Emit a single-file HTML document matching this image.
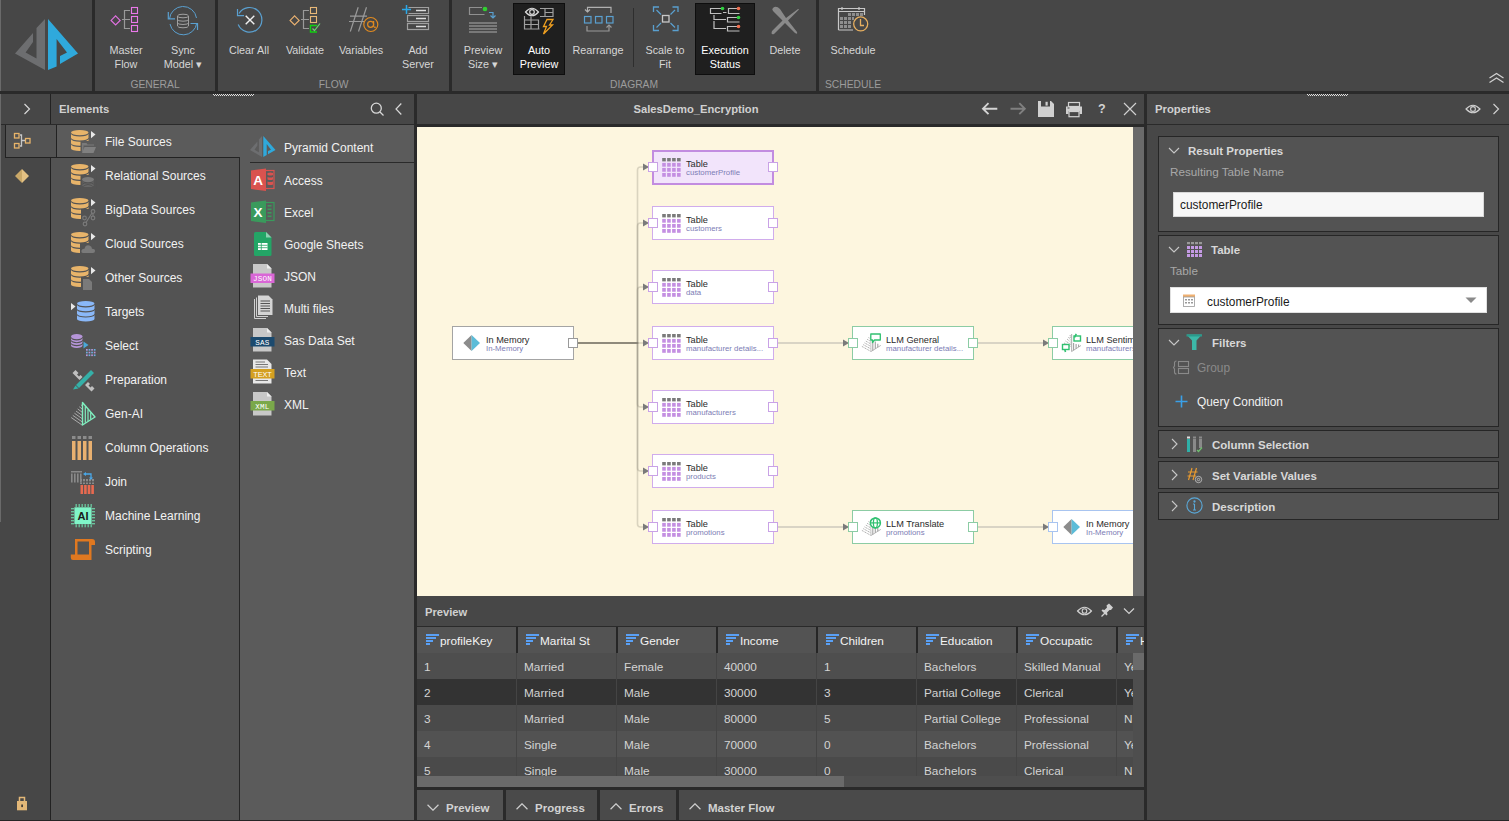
<!DOCTYPE html>
<html><head><meta charset="utf-8">
<style>
*{box-sizing:border-box;margin:0;padding:0}
html,body{width:1509px;height:821px;overflow:hidden;background:#474747;font-family:"Liberation Sans",sans-serif;color:#dcdcdc}
.a{position:absolute}
.sep{position:absolute;background:#2a2a2a}
.btn{position:absolute;top:0;text-align:center;font-size:10.8px;line-height:14px;color:#d6d6d6}
.btn .t{position:absolute;left:-30px;right:-30px;top:43px}
.glabel{position:absolute;top:78.5px;font-size:10.3px;line-height:12px;color:#9c9c9c;text-align:center}
.hdr{font-size:11.3px;font-weight:bold;color:#d0d0d0;line-height:16px}
.cat{font-size:12px;color:#f2f2f2;line-height:18px;white-space:nowrap}
.ntitle{font-size:9.2px;color:#2a2a2a;line-height:11px;white-space:nowrap}
.nsub{font-size:7.8px;color:#7d7db5;line-height:10px;white-space:nowrap}
.phdr{font-size:11.5px;font-weight:bold;color:#d8d8d8;line-height:16px;white-space:nowrap}
.plbl{font-size:11.7px;color:#a8a8a8;line-height:16px;white-space:nowrap}
</style></head><body>
<!-- left strip -->
<div class="a" style="left:0;top:0;width:1px;height:522px;background:#6a6a6a"></div>
<!-- toolbar -->
<div class="a" style="left:1px;top:0;width:1508px;height:91px;background:#474747"></div>
<div class="sep" style="left:0;top:91px;width:1509px;height:3px"></div>
<div class="sep" style="left:92px;top:0;width:3px;height:91px"></div>
<div class="sep" style="left:215px;top:0;width:3px;height:91px"></div>
<div class="sep" style="left:449px;top:0;width:3px;height:91px"></div>
<div class="sep" style="left:816px;top:0;width:3px;height:91px"></div>

<!-- body regions -->
<div class="a" style="left:1px;top:94px;width:49px;height:726px;background:#474747"></div>
<div class="sep" style="left:50px;top:94px;width:1px;height:726px;background:#222"></div>
<div class="a" style="left:51px;top:94px;width:363px;height:30px;background:#474747"></div>
<div class="sep" style="left:1px;top:124px;width:413px;height:1px"></div>
<div class="a" style="left:51px;top:125px;width:188px;height:695px;background:#535353"></div>
<div class="sep" style="left:239px;top:157px;width:1px;height:663px;background:#262626"></div>
<div class="a" style="left:240px;top:125px;width:174px;height:695px;background:#5b5b5b"></div>
<div class="sep" style="left:414px;top:94px;width:3px;height:727px"></div>

<!-- canvas -->
<div class="a" style="left:417px;top:94px;width:727px;height:30px;background:#474747"></div>
<div class="sep" style="left:417px;top:124px;width:727px;height:3px"></div>
<div class="a" style="left:417px;top:127px;width:716px;height:469px;background:#fdf6df"></div>
<div class="a" style="left:1133px;top:127px;width:11px;height:469px;background:#6a6a6a"></div>
<div class="sep" style="left:1144px;top:94px;width:3px;height:727px"></div>

<!-- preview -->
<div class="a" style="left:417px;top:596px;width:727px;height:30px;background:#474747"></div>
<div class="sep" style="left:417px;top:626px;width:727px;height:1px"></div>

<!-- properties -->
<div class="a" style="left:1147px;top:94px;width:362px;height:30px;background:#474747"></div>
<div class="sep" style="left:1147px;top:124px;width:362px;height:1px"></div>
<div class="sep" style="left:0;top:820px;width:1509px;height:1px;background:#262626"></div>
<!-- LOGO -->
<svg class="a" style="left:0;top:0" width="92" height="91" viewBox="0 0 92 91">
<polygon fill="#6d6e70" points="45,19 45,70 15,53.6 33,33 33,42 25.6,52.4 36.5,58.5 36.5,28"/>
<polygon fill="#2fa9dc" points="48,19 78,53.6 60,64 60,56 67,52.4 56.6,39 56.6,66.4 48,70"/>
</svg>
<!-- GENERAL -->
<svg class="a" style="left:95px;top:0" width="120" height="40" viewBox="95 0 120 40" fill="none" stroke-width="1.2">
<path d="M115.6 15.9 L120.1 20.4 L115.6 24.9 L111.1 20.4 Z" stroke="#e070e0"/>
<rect x="131.5" y="7.5" width="6" height="6" stroke="#ea78ea" stroke-width="1.1"/>
<rect x="131.5" y="16.5" width="6" height="6" stroke="#ea78ea" stroke-width="1.1"/>
<rect x="131.5" y="25.5" width="6" height="6" stroke="#ea78ea" stroke-width="1.1"/>
<path d="M130 10.5 H124.5 V28.5 H130 M122 19.5 H130" stroke="#9a9a9a"/>
<path d="M169.5 19 A13.6 13.6 0 0 1 196.5 18" stroke="#5aa0d0" stroke-width="1"/>
<path d="M168.3 12 V18.8 H175" stroke="#5aa0d0"/>
<path d="M196.8 23 A13.6 13.6 0 0 1 170 24" stroke="#5aa0d0" stroke-width="1"/>
<path d="M190.5 23.5 H197.5 V30" stroke="#5aa0d0"/>
<g stroke="#a0a0a0" stroke-width="1"><ellipse cx="183" cy="16" rx="5.5" ry="1.8"/><path d="M177.5 16 V26 A5.5 1.8 0 0 0 188.5 26 V16 M177.5 19.4 A5.5 1.8 0 0 0 188.5 19.4 M177.5 22.7 A5.5 1.8 0 0 0 188.5 22.7"/></g>
</svg>
<div class="btn" style="left:126px"><div class="t">Master<br>Flow</div></div>
<div class="btn" style="left:183px"><div class="t">Sync<br>Model &#9662;</div></div>
<div class="glabel" style="left:95px;width:120px">GENERAL</div>
<!-- FLOW -->
<svg class="a" style="left:218px;top:0" width="231" height="40" viewBox="218 0 231 40" fill="none" stroke-width="1.2">
<path d="M238.2 24.5 A12.3 12.3 0 1 0 239 13.5" stroke="#5aa0d0"/>
<path d="M237.5 9 V15.7 H244" stroke="#5aa0d0"/>
<path d="M245.7 15.7 L254.3 24.3 M254.3 15.7 L245.7 24.3" stroke="#f0f0f0" stroke-width="1.4"/>
<path d="M294.6 15.9 L299.1 20.4 L294.6 24.9 L290.1 20.4 Z" stroke="#e8b070"/>
<rect x="310.5" y="7.5" width="6" height="6" stroke="#e8b878" stroke-width="1.1"/>
<rect x="310.5" y="16.5" width="6" height="6" stroke="#e8b878" stroke-width="1.1"/>
<path d="M317 25.5 H310.5 V32 H317" stroke="#10d010" stroke-width="1.4"/>
<path d="M312.5 28.5 L314.5 30.5 L320 23.5" stroke="#70d070"/>
<path d="M309 10.5 H303.5 V28.5 H309 M301 19.5 H309" stroke="#9a9a9a"/>
<path d="M358.2 7.3 L350.3 31.5 M366.5 7.3 L358.5 31.5 M350 16.2 H367 M349 21.5 H364" stroke="#9a9a9a"/>
<circle cx="370.8" cy="24.5" r="7" stroke="#e08a20"/>
<circle cx="370.6" cy="24.3" r="3" stroke="#e08a20"/>
<path d="M373.6 21 V26 Q374 28 376 27" stroke="#e08a20"/>
<path d="M402 9.4 H411 M406.5 5 V14" stroke="#2aa8e8" stroke-width="1.5"/>
<path d="M408.5 7.5 H428.5 V13.5 H408.5" stroke="#a0a0a0"/>
<rect x="407.5" y="15.5" width="21" height="6" stroke="#a0a0a0"/>
<rect x="407.5" y="23.5" width="21" height="6" stroke="#a0a0a0"/>
<path d="M416 10.5 H426 M416 18.5 H426 M416 26.5 H426" stroke="#dcdcdc" stroke-width="1.3"/>
</svg>
<div class="btn" style="left:249px"><div class="t">Clear All</div></div>
<div class="btn" style="left:305px"><div class="t">Validate</div></div>
<div class="btn" style="left:361px"><div class="t">Variables</div></div>
<div class="btn" style="left:418px"><div class="t">Add<br>Server</div></div>
<div class="glabel" style="left:218px;width:231px">FLOW</div>
<!-- DIAGRAM -->
<div class="a" style="left:513px;top:3px;width:52px;height:72px;background:#1f1f1f;border:1px solid #0e0e0e"></div>
<div class="a" style="left:695px;top:3px;width:60px;height:72px;background:#1f1f1f;border:1px solid #0e0e0e"></div>
<div class="a" style="left:633px;top:8px;width:1px;height:59px;background:#2e2e2e"></div>
<svg class="a" style="left:452px;top:0" width="364" height="40" viewBox="452 0 364 40" fill="none" stroke-width="1.2">
<path d="M484.5 14.5 H469.5 V7.5 H482" stroke="#909090"/>
<circle cx="485" cy="9" r="2.3" fill="#30d030" stroke="none"/>
<path d="M489 12.5 H493 V18 M490.5 15.5 L493 18 L495.5 15.5" stroke="#5aa0d0"/>
<path d="M469 23 H497 M469 26 H497 M469 29 H497 M469 32 H497" stroke="#8a8a8a" stroke-width="1.6"/>
<path d="M525.5 12 Q532 4.5 538.5 12 Q532 19.5 525.5 12 Z" stroke="#d8d8d8"/>
<circle cx="532" cy="12" r="2.3" stroke="#d8d8d8"/>
<path d="M540 8.5 H553 V16.5 H540 M545 8.5 V16.5 M545 12.5 H553" stroke="#a0a0a0"/>
<path d="M524.5 16 V29 H539.5 M524.5 20 H538.5 V29 M524.5 24.5 H538.5 M531 16.5 V29" stroke="#a0a0a0"/>
<path d="M547 19.5 H553 L549.5 25 H552.5 L543.5 34 L546.5 26.5 H543.5 Z" stroke="#f0a020" stroke-width="1.3"/>
<path d="M587.5 12 V7.3 H611 V13" stroke="#b0b0b0"/>
<path d="M585 9.5 L587.5 12 L590 9.5" stroke="#b0b0b0"/>
<rect x="584.5" y="16.5" width="6.5" height="6.5" stroke="#5aa0d0"/>
<rect x="595.5" y="16.5" width="6.5" height="6.5" stroke="#5aa0d0"/>
<rect x="606.5" y="16.5" width="6.5" height="6.5" stroke="#5aa0d0"/>
<path d="M587 26 V31 H609 V25" stroke="#9a9a9a"/>
<path d="M606.5 27.5 L609 25 L611.5 27.5" stroke="#9a9a9a"/>
<path d="M653.5 12 V7 H659 M672.5 7 H678 V12 M653.5 25 V30.5 H659 M672.5 30.5 H678 V25" stroke="#5aa0d0" stroke-width="1.3"/>
<path d="M656.5 10 L661 14.5 M675 10 L670.5 14.5 M656.5 27.5 L661 23 M675 27.5 L670.5 23" stroke="#5aa0d0"/>
<rect x="662.5" y="15.5" width="6.5" height="6.5" stroke="#c8c8c8" stroke-width="1.3"/>
<path d="M722 8.5 H710.5 V13.5 H721.5 M739 8.5 H728.5 V13.5 H739.5 M723 12.5 H726.5" stroke="#c0c0c0"/>
<path d="M714 15 V19.5 H726 M739 17.5 H727.5 V22 H739.5 M714 21 V28.5 H726 M739 26.5 H727.5 V31 H739.5" stroke="#c0c0c0"/>
<circle cx="722.5" cy="8.5" r="1.8" fill="#30d040" stroke="none"/>
<circle cx="738.5" cy="8.5" r="1.8" fill="#f07050" stroke="none"/>
<circle cx="738.5" cy="17.5" r="1.8" fill="#30d040" stroke="none"/>
<circle cx="738.5" cy="26.5" r="1.8" fill="#f07050" stroke="none"/>
<path d="M773 8 Q776 5 780 9 L786 18 L798 9 Q799.5 8.5 798.5 10 L788 20.5 L797 32 Q798 35 795 33 L785 23 L774 34 Q770.5 35 772 31 L782.5 20.5 L773 11 Q771.5 9 773 8 Z" fill="#8a8a8a" stroke="none"/>
</svg>
<div class="btn" style="left:483px"><div class="t">Preview<br>Size &#9662;</div></div>
<div class="btn" style="left:539px;color:#fff"><div class="t">Auto<br>Preview</div></div>
<div class="btn" style="left:598px"><div class="t">Rearrange</div></div>
<div class="btn" style="left:665px"><div class="t">Scale to<br>Fit</div></div>
<div class="btn" style="left:725px;color:#fff"><div class="t">Execution<br>Status</div></div>
<div class="btn" style="left:785px"><div class="t">Delete</div></div>
<div class="glabel" style="left:452px;width:364px">DIAGRAM</div>
<!-- SCHEDULE -->
<svg class="a" style="left:819px;top:0" width="60" height="40" viewBox="819 0 60 40" fill="none">
<path d="M838.5 30 V8.5 H864.5 V15" stroke="#c8c8c8" stroke-width="1.2"/>
<path d="M838.5 11.5 H864.5 M838.5 30 H853" stroke="#c8c8c8" stroke-width="1.2"/>
<path d="M842 7 V10 M859 7 V10" stroke="#c8c8c8" stroke-width="1.2"/>
<g fill="#8e8e8e"><rect x="848" y="13" width="3" height="3"/><rect x="852" y="13" width="3" height="3"/><rect x="856" y="13" width="3" height="3"/><rect x="860" y="13" width="3" height="3"/>
<rect x="840" y="17" width="3" height="3"/><rect x="844" y="17" width="3" height="3"/><rect x="848" y="17" width="3" height="3"/><rect x="852" y="17" width="2" height="3"/>
<rect x="840" y="21" width="3" height="3"/><rect x="844" y="21" width="3" height="3"/><rect x="848" y="21" width="3" height="3"/>
<rect x="840" y="25" width="3" height="3"/><rect x="844" y="25" width="3" height="3"/><rect x="848" y="25" width="3" height="3"/></g>
<circle cx="860.7" cy="23.9" r="7" stroke="#e8b060" stroke-width="1.3"/>
<path d="M860.5 19 V25.5 H864" stroke="#e8b060" stroke-width="1.3"/>
</svg>
<div class="btn" style="left:853px"><div class="t">Schedule</div></div>
<div class="glabel" style="left:793px;width:120px">SCHEDULE</div>
<svg class="a" style="left:1486px;top:70px" width="20" height="16" viewBox="1486 70 20 16" fill="none" stroke="#d0d0d0" stroke-width="1.3">
<path d="M1489.5 78 L1496.5 73.5 L1503.5 78 M1489.5 82.5 L1496.5 78 L1503.5 82.5"/>
</svg>
<!-- grips -->
<svg class="a" style="left:213px;top:94px" width="41" height="2"><pattern id="zz" width="2" height="2" patternUnits="userSpaceOnUse"><rect x="0" y="0" width="1" height="1" fill="#e0e0e0"/><rect x="1" y="1" width="1" height="1" fill="#e0e0e0"/></pattern><rect width="41" height="2" fill="url(#zz)"/></svg>
<svg class="a" style="left:1307px;top:94px" width="41" height="2"><rect width="41" height="2" fill="url(#zz)"/></svg>
<!-- left sidebar -->
<svg class="a" style="left:22px;top:103px" width="10" height="12" viewBox="0 0 10 12" fill="none" stroke="#d8d8d8" stroke-width="1.2"><path d="M2.5 1 L7.5 6 L2.5 11"/></svg>
<div class="a" style="left:5px;top:125px;width:52px;height:33px;background:#535353;border-left:1px solid #222;border-right:1px solid #222;border-bottom:1px solid #222"></div>
<svg class="a" style="left:10px;top:128px" width="26" height="26" viewBox="10 128 26 26" fill="none" stroke-width="1.3">
<rect x="14.5" y="133.5" width="4.5" height="4.5" stroke="#e8b46a"/>
<rect x="14.5" y="143.5" width="4.5" height="4.5" stroke="#e8b46a"/>
<rect x="25.5" y="138.5" width="4.5" height="4.5" stroke="#e8b46a"/>
<path d="M20 135 H21.5 V146 H20 M21.5 140.5 H25" stroke="#c8c8c8"/>
</svg>
<svg class="a" style="left:14px;top:168px" width="16" height="16" viewBox="0 0 16 16"><polygon points="8,1 15,8 8,15" fill="#e3c183"/><polygon points="8,1 1,8 8,15" fill="#c9a868"/></svg>
<svg class="a" style="left:15px;top:795px" width="14" height="16" viewBox="15 795 14 16"><path d="M19.5 801.5 V797.5 H24.5 V801.5" fill="none" stroke="#e3b878" stroke-width="1.5"/><rect x="17" y="801" width="10" height="9.3" fill="#e3b878"/><rect x="21.3" y="804.5" width="1.6" height="2.6" fill="#333"/></svg>

<!-- Elements header -->
<div class="a hdr" style="left:59px;top:101px;font-size:11.3px">Elements</div>
<svg class="a" style="left:368px;top:100px" width="40" height="18" viewBox="368 100 40 18" fill="none" stroke="#d8d8d8" stroke-width="1.3">
<circle cx="376.3" cy="108.2" r="5"/><path d="M380 112 L383.5 115.5"/>
<path d="M401.3 103.5 L396 109 L401.3 114.5" stroke-width="1.2"/>
</svg>
<!-- selected category -->
<div class="a" style="left:56px;top:125px;width:184px;height:33px;background:#5b5b5b;border-left:1px solid #222;border-bottom:1px solid #222"></div>
<div class="a" style="left:239px;top:157px;width:1px;height:663px;background:#262626"></div>
<div class="a" style="left:250px;top:162px;width:164px;height:1px;background:#2a2a2a"></div>
<div class="a cat" style="left:105px;top:133px">File Sources</div>
<div class="a cat" style="left:105px;top:167px">Relational Sources</div>
<div class="a cat" style="left:105px;top:201px">BigData Sources</div>
<div class="a cat" style="left:105px;top:235px">Cloud Sources</div>
<div class="a cat" style="left:105px;top:269px">Other Sources</div>
<div class="a cat" style="left:105px;top:303px">Targets</div>
<div class="a cat" style="left:105px;top:337px">Select</div>
<div class="a cat" style="left:105px;top:371px">Preparation</div>
<div class="a cat" style="left:105px;top:405px">Gen-AI</div>
<div class="a cat" style="left:105px;top:439px">Column Operations</div>
<div class="a cat" style="left:105px;top:473px">Join</div>
<div class="a cat" style="left:105px;top:507px">Machine Learning</div>
<div class="a cat" style="left:105px;top:541px">Scripting</div>
<div class="a cat" style="left:284px;top:139px">Pyramid Content</div>
<div class="a cat" style="left:284px;top:172px">Access</div>
<div class="a cat" style="left:284px;top:204px">Excel</div>
<div class="a cat" style="left:284px;top:236px">Google Sheets</div>
<div class="a cat" style="left:284px;top:268px">JSON</div>
<div class="a cat" style="left:284px;top:300px">Multi files</div>
<div class="a cat" style="left:284px;top:332px">Sas Data Set</div>
<div class="a cat" style="left:284px;top:364px">Text</div>
<div class="a cat" style="left:284px;top:396px">XML</div>
<svg class="a" style="left:51px;top:125px" width="189" height="440" viewBox="51 125 189 440">
<g fill="#e8b46a"><ellipse cx="79.75" cy="132.6" rx="8.75" ry="2.6"/><path d="M71 133.79999999999998 V137.86666666666667 A8.75 2.6 0 0 0 88.5 137.86666666666667 V133.79999999999998 A8.75 2.6 0 0 1 71 133.79999999999998 Z"/><path d="M71 139.06666666666666 V143.13333333333335 A8.75 2.6 0 0 0 88.5 143.13333333333335 V139.06666666666666 A8.75 2.6 0 0 1 71 139.06666666666666 Z"/><path d="M71 144.33333333333331 V148.4 A8.75 2.6 0 0 0 88.5 148.4 V144.33333333333331 A8.75 2.6 0 0 1 71 144.33333333333331 Z"/></g><polygon points="91,131 95.5,134.6 91,138.2" fill="#e8e8e8"/><rect x="80.5" y="141" width="16" height="13" fill="#5b5b5b"/><path d="M82 143 H86.5 L87.5 144.5 H94 V145.5 H83.5 V150 L82 152.5 Z" fill="#7a7a7a"/><path d="M84.5 147 H96 L93.5 153 H82 Z" fill="#808080"/><g fill="#e8b46a"><ellipse cx="79.75" cy="166.6" rx="8.75" ry="2.6"/><path d="M71 167.79999999999998 V171.86666666666667 A8.75 2.6 0 0 0 88.5 171.86666666666667 V167.79999999999998 A8.75 2.6 0 0 1 71 167.79999999999998 Z"/><path d="M71 173.06666666666666 V177.13333333333335 A8.75 2.6 0 0 0 88.5 177.13333333333335 V173.06666666666666 A8.75 2.6 0 0 1 71 173.06666666666666 Z"/><path d="M71 178.33333333333331 V182.4 A8.75 2.6 0 0 0 88.5 182.4 V178.33333333333331 A8.75 2.6 0 0 1 71 178.33333333333331 Z"/></g><polygon points="91,165 95.5,168.6 91,172.2" fill="#e8e8e8"/><rect x="80.5" y="175" width="16" height="14" fill="#535353"/><g fill="#7a7a7a"><ellipse cx="88.0" cy="179.6" rx="6.0" ry="2.6"/><path d="M82 180.79999999999998 V181.2 A6.0 2.6 0 0 0 94 181.2 V180.79999999999998 A6.0 2.6 0 0 1 82 180.79999999999998 Z"/><path d="M82 182.39999999999998 V182.79999999999998 A6.0 2.6 0 0 0 94 182.79999999999998 V182.39999999999998 A6.0 2.6 0 0 1 82 182.39999999999998 Z"/><path d="M82 183.99999999999997 V184.39999999999998 A6.0 2.6 0 0 0 94 184.39999999999998 V183.99999999999997 A6.0 2.6 0 0 1 82 183.99999999999997 Z"/></g><g fill="#e8b46a"><ellipse cx="79.75" cy="200.6" rx="8.75" ry="2.6"/><path d="M71 201.79999999999998 V205.86666666666667 A8.75 2.6 0 0 0 88.5 205.86666666666667 V201.79999999999998 A8.75 2.6 0 0 1 71 201.79999999999998 Z"/><path d="M71 207.06666666666666 V211.13333333333335 A8.75 2.6 0 0 0 88.5 211.13333333333335 V207.06666666666666 A8.75 2.6 0 0 1 71 207.06666666666666 Z"/><path d="M71 212.33333333333331 V216.4 A8.75 2.6 0 0 0 88.5 216.4 V212.33333333333331 A8.75 2.6 0 0 1 71 212.33333333333331 Z"/></g><polygon points="91,199 95.5,202.6 91,206.2" fill="#e8e8e8"/><rect x="81" y="209" width="15" height="14" fill="#535353"/><g fill="none" stroke="#7a7a7a" stroke-width="1.2"><circle cx="93" cy="211.5" r="1.8"/><circle cx="84.5" cy="218" r="1.8"/><circle cx="93" cy="218" r="1.8"/><circle cx="85" cy="224" r="1.8"/><path d="M92 213 L86 222.5 M93 213.3 V216.2"/></g><g fill="#e8b46a"><ellipse cx="79.75" cy="234.6" rx="8.75" ry="2.6"/><path d="M71 235.79999999999998 V239.86666666666667 A8.75 2.6 0 0 0 88.5 239.86666666666667 V235.79999999999998 A8.75 2.6 0 0 1 71 235.79999999999998 Z"/><path d="M71 241.06666666666666 V245.13333333333335 A8.75 2.6 0 0 0 88.5 245.13333333333335 V241.06666666666666 A8.75 2.6 0 0 1 71 241.06666666666666 Z"/><path d="M71 246.33333333333331 V250.4 A8.75 2.6 0 0 0 88.5 250.4 V246.33333333333331 A8.75 2.6 0 0 1 71 246.33333333333331 Z"/></g><polygon points="91,233 95.5,236.6 91,240.2" fill="#e8e8e8"/><rect x="80" y="243" width="16" height="12" fill="#535353"/><path d="M83 253 Q81 253 81.5 250.5 Q82 248.5 84.5 248.8 Q85.5 244.5 89.5 245.5 Q92 246.5 92 248.8 Q95 248.8 95 251 Q95 253 93 253 Z" fill="#7a7a7a"/><g fill="#e8b46a"><ellipse cx="79.75" cy="268.6" rx="8.75" ry="2.6"/><path d="M71 269.8 V273.8666666666667 A8.75 2.6 0 0 0 88.5 273.8666666666667 V269.8 A8.75 2.6 0 0 1 71 269.8 Z"/><path d="M71 275.06666666666666 V279.1333333333333 A8.75 2.6 0 0 0 88.5 279.1333333333333 V275.06666666666666 A8.75 2.6 0 0 1 71 275.06666666666666 Z"/><path d="M71 280.33333333333337 V284.40000000000003 A8.75 2.6 0 0 0 88.5 284.40000000000003 V280.33333333333337 A8.75 2.6 0 0 1 71 280.33333333333337 Z"/></g><polygon points="91,267 95.5,270.6 91,274.2" fill="#e8e8e8"/><rect x="81" y="277" width="15" height="14" fill="#535353"/><path d="M83 279 H89 L92 282 V290 H83 Z" fill="#7a7a7a"/><polygon points="71,303 75.5,306.6 71,310.2" fill="#e8e8e8"/><g fill="#8ab8f8"><ellipse cx="85.75" cy="303.6" rx="8.75" ry="2.6"/><path d="M77 304.8 V308.70000000000005 A8.75 2.6 0 0 0 94.5 308.70000000000005 V304.8 A8.75 2.6 0 0 1 77 304.8 Z"/><path d="M77 309.90000000000003 V313.80000000000007 A8.75 2.6 0 0 0 94.5 313.80000000000007 V309.90000000000003 A8.75 2.6 0 0 1 77 309.90000000000003 Z"/><path d="M77 315.0 V318.90000000000003 A8.75 2.6 0 0 0 94.5 318.90000000000003 V315.0 A8.75 2.6 0 0 1 77 315.0 Z"/></g><g fill="#b595d8"><ellipse cx="76.75" cy="336.6" rx="5.75" ry="2.6"/><path d="M71 337.8 V339.53333333333336 A5.75 2.6 0 0 0 82.5 339.53333333333336 V337.8 A5.75 2.6 0 0 1 71 337.8 Z"/><path d="M71 340.73333333333335 V342.4666666666667 A5.75 2.6 0 0 0 82.5 342.4666666666667 V340.73333333333335 A5.75 2.6 0 0 1 71 340.73333333333335 Z"/><path d="M71 343.6666666666667 V345.40000000000003 A5.75 2.6 0 0 0 82.5 345.40000000000003 V343.6666666666667 A5.75 2.6 0 0 1 71 343.6666666666667 Z"/></g><polygon points="83.5,341.5 88.5,345 83.5,348.5" fill="#4aa8d8"/><rect x="86.0" y="349.0" width="1.7" height="1.7" fill="#b595d8"/><rect x="88.6" y="349.0" width="1.7" height="1.7" fill="#6ab0e0"/><rect x="91.2" y="349.0" width="1.7" height="1.7" fill="#b595d8"/><rect x="93.8" y="349.0" width="1.7" height="1.7" fill="#6ab0e0"/><rect x="86.0" y="351.7" width="1.7" height="1.7" fill="#6ab0e0"/><rect x="88.6" y="351.7" width="1.7" height="1.7" fill="#b595d8"/><rect x="91.2" y="351.7" width="1.7" height="1.7" fill="#6ab0e0"/><rect x="93.8" y="351.7" width="1.7" height="1.7" fill="#b595d8"/><rect x="86.0" y="354.4" width="1.7" height="1.7" fill="#b595d8"/><rect x="88.6" y="354.4" width="1.7" height="1.7" fill="#6ab0e0"/><rect x="91.2" y="354.4" width="1.7" height="1.7" fill="#b595d8"/><rect x="93.8" y="354.4" width="1.7" height="1.7" fill="#6ab0e0"/><g><path d="M72.5 373 L75.5 370 L78.5 373 L77 374.5 L79 376.5 L80.5 375 L82.5 377 L79.5 380 Z" fill="#c0c0c0"/><path d="M85 385 L88 382 L90 384 L88.5 385.5 L90.5 387.5 L92 386 L94.5 388.5 L91.5 391.5 Z" fill="#c0c0c0"/><path d="M91 370 L94 373 L79 388 L76 385 Z" fill="#35b0a8"/><path d="M75.5 385.5 L78.5 388.5 L73 389.5 Z" fill="#35b0a8"/></g><g><polygon points="82.5,402.5 95,417 82.5,425" fill="none" stroke="#80f0c0" stroke-width="1.4" stroke-linejoin="round"/><path d="M85.3 406.25 V422.71" stroke="#80f0c0" stroke-width="1.2"/><path d="M88 409.38 V420.98" stroke="#80f0c0" stroke-width="1.2"/><path d="M90.7 412.51 V419.25" stroke="#80f0c0" stroke-width="1.2"/><path d="M71.20 417.50 L82 425.00" stroke="#b4b4b4" stroke-width="0.9"/><path d="M72.81 415.36 L82 421.79" stroke="#b4b4b4" stroke-width="0.9"/><path d="M74.43 413.21 L82 418.57" stroke="#b4b4b4" stroke-width="0.9"/><path d="M76.04 411.07 L82 415.36" stroke="#b4b4b4" stroke-width="0.9"/><path d="M77.66 408.93 L82 412.14" stroke="#b4b4b4" stroke-width="0.9"/><path d="M79.27 406.79 L82 408.93" stroke="#b4b4b4" stroke-width="0.9"/><path d="M80.89 404.64 L82 405.71" stroke="#b4b4b4" stroke-width="0.9"/></g><g fill="#8c8c8c"><rect x="72" y="436" width="3.5" height="3"/><rect x="77.5" y="436" width="3.5" height="3"/><rect x="83" y="436" width="3.5" height="3"/><rect x="88.5" y="436" width="3.5" height="3"/></g><g fill="#e8b070"><rect x="72" y="441" width="3.5" height="19"/><rect x="77.5" y="441" width="3.5" height="19"/><rect x="83" y="441" width="3.5" height="19"/><rect x="88.5" y="441" width="3.5" height="19"/></g><g fill="#8a8a8a"><rect x="71" y="471" width="11" height="1.5"/><rect x="71" y="473.5" width="1.6" height="9"/><rect x="74" y="473.5" width="1.6" height="9"/><rect x="77" y="473.5" width="1.6" height="9"/><rect x="80" y="473.5" width="1.6" height="9"/><rect x="80" y="479" width="2" height="2.3"/><rect x="80" y="482.5" width="2" height="1.5"/><rect x="83" y="479" width="2" height="2.3"/><rect x="83" y="482.5" width="2" height="1.5"/><rect x="86" y="479" width="2" height="2.3"/><rect x="86" y="482.5" width="2" height="1.5"/><rect x="89" y="479" width="2" height="2.3"/><rect x="89" y="482.5" width="2" height="1.5"/><rect x="92" y="479" width="2" height="2.3"/><rect x="92" y="482.5" width="2" height="1.5"/></g><g fill="#e86a50"><rect x="80.5" y="485" width="2.6" height="9"/><rect x="84.1" y="485" width="2.6" height="9"/><rect x="87.7" y="485" width="2.6" height="9"/><rect x="91.3" y="485" width="2.6" height="9"/></g><path d="M85 474 H91 V478.5" fill="none" stroke="#4aa8e8" stroke-width="1.3"/><polygon points="89,477.5 91,480 93,477.5" fill="#4aa8e8"/><polygon points="86,472 83,474 86,476" fill="#4aa8e8"/><g><rect x="74.4" y="507.3" width="17.2" height="16.8" fill="#80f5c8"/><rect x="75.6" y="504" width="1.1" height="3" fill="#70e0b0"/><rect x="75.6" y="524.3" width="1.1" height="3" fill="#70e0b0"/><rect x="71" y="508.2" width="3" height="1.1" fill="#70e0b0"/><rect x="92" y="508.2" width="3" height="1.1" fill="#70e0b0"/><rect x="78.6" y="504" width="1.1" height="3" fill="#70e0b0"/><rect x="78.6" y="524.3" width="1.1" height="3" fill="#70e0b0"/><rect x="71" y="511.2" width="3" height="1.1" fill="#70e0b0"/><rect x="92" y="511.2" width="3" height="1.1" fill="#70e0b0"/><rect x="81.6" y="504" width="1.1" height="3" fill="#70e0b0"/><rect x="81.6" y="524.3" width="1.1" height="3" fill="#70e0b0"/><rect x="71" y="514.2" width="3" height="1.1" fill="#70e0b0"/><rect x="92" y="514.2" width="3" height="1.1" fill="#70e0b0"/><rect x="84.6" y="504" width="1.1" height="3" fill="#70e0b0"/><rect x="84.6" y="524.3" width="1.1" height="3" fill="#70e0b0"/><rect x="71" y="517.2" width="3" height="1.1" fill="#70e0b0"/><rect x="92" y="517.2" width="3" height="1.1" fill="#70e0b0"/><rect x="87.6" y="504" width="1.1" height="3" fill="#70e0b0"/><rect x="87.6" y="524.3" width="1.1" height="3" fill="#70e0b0"/><rect x="71" y="520.2" width="3" height="1.1" fill="#70e0b0"/><rect x="92" y="520.2" width="3" height="1.1" fill="#70e0b0"/><rect x="90.6" y="504" width="1.1" height="3" fill="#70e0b0"/><rect x="90.6" y="524.3" width="1.1" height="3" fill="#70e0b0"/><rect x="71" y="523.2" width="3" height="1.1" fill="#70e0b0"/><rect x="92" y="523.2" width="3" height="1.1" fill="#70e0b0"/><text x="83" y="520" font-family="Liberation Sans" font-weight="bold" font-size="11" fill="#1a1a1a" text-anchor="middle">AI</text></g><path d="M75 539 H92 Q95 539 95 542 V545 H91.5 V560 H73 Q70.8 560 70.8 557.5 V554.5 H75 Z M77.5 541.5 V554.5 H89 V541.5 Z" fill="#e07820" fill-rule="evenodd"/></svg>
<svg class="a" style="left:241px;top:126px" width="173" height="300" viewBox="241 126 173 300">
<polygon fill="#6d6e70" points="262,136 262,157 250,150 257.4,141.5 257.4,145.5 254.5,149.7 258.9,152.3 258.9,139.5"/><polygon fill="#2fa9dc" points="263.3,136 275.5,150 268,154.3 268,151 271,149.7 266.7,144 266.7,155 263.3,157"/><path d="M251 170.5 L266 168.5 V191 L251 189 Z" fill="#d9534f"/><rect x="265" y="170.5" width="9" height="18" fill="none" stroke="#d9534f" stroke-width="1.2"/><path d="M267.5 173 Q270.5 171.8 273 173 V175 Q270.5 176 267.5 175 Z M267.5 177 Q270.5 178 273 177 V179.5 Q270.5 180.5 267.5 179.5 Z M267.5 181.5 Q270.5 182.5 273 181.5 V184.5 Q270.5 185.5 267.5 184.5 Z" fill="#d9534f"/><text x="258" y="185" font-family="Liberation Sans" font-weight="bold" font-size="13.5" fill="#fff" text-anchor="middle">A</text><path d="M251 202.5 L266 200.5 V223 L251 221 Z" fill="#3a9a5c"/><rect x="265" y="202.5" width="9" height="18" fill="none" stroke="#3a9a5c" stroke-width="1.2"/><g fill="#3a9a5c"><rect x="267.5" y="205" width="4" height="1.6"/><rect x="267.5" y="208.5" width="4" height="1.6"/><rect x="267.5" y="212" width="4" height="1.6"/><rect x="267.5" y="215.5" width="4" height="1.6"/></g><text x="258" y="216.8" font-family="Liberation Sans" font-weight="bold" font-size="13.5" fill="#fff" text-anchor="middle">X</text><path d="M255.5 232 H266 L271.5 237.5 V254.5 Q271.5 256 270 256 H255.5 Q254 256 254 254.5 V233.5 Q254 232 255.5 232 Z" fill="#23a566"/><path d="M266 232 L271.5 237.5 H266 Z" fill="#8ed1b1"/><rect x="258" y="243" width="9.5" height="7" fill="#fff"/><path d="M258 245.3 H267.5 M258 247.7 H267.5 M261.3 243 V250" stroke="#23a566" stroke-width="0.8"/><path d="M253 264 H267 L271.5 268.5 V287.5 H253 Z" fill="#c8c8c8"/><path d="M267 264 L271.5 268.5 H267 Z" fill="#eeeeee"/><rect x="250.5" y="273.5" width="24" height="9.5" fill="#d966d6"/><text x="262.5" y="281.3" font-family="Liberation Mono" font-size="7.6" fill="#fff" text-anchor="middle" letter-spacing="0.2">JSON</text><g fill="none" stroke="#d0d0d0" stroke-width="1"><path d="M254.5 299 V318.5 H266"/><path d="M256.5 297.5 V316.5 H268"/></g><path d="M258 295.5 H268.5 L272.5 299.5 V315 H258 Z" fill="#d4d4d4"/><g stroke="#555" stroke-width="1"><path d="M260.5 301 H270 M260.5 303.5 H270 M260.5 306 H270 M260.5 308.5 H270 M260.5 311 H270"/></g><path d="M253 328 H267 L271.5 332.5 V351.5 H253 Z" fill="#c8c8c8"/><path d="M267 328 L271.5 332.5 H267 Z" fill="#eeeeee"/><rect x="250.5" y="337" width="24" height="9.5" fill="#1c4a6e"/><text x="262.5" y="344.8" font-family="Liberation Mono" font-size="7.6" fill="#fff" text-anchor="middle" letter-spacing="0.2">SAS</text><path d="M253 359.5 H267 L271.5 364 V383.5 H253 Z" fill="#e8e8e8"/><g stroke="#777" stroke-width="1"><path d="M255.5 362 H265 M255.5 364.5 H268 M255.5 367 H268 M255.5 380.5 H268"/></g><rect x="250.5" y="369" width="24" height="9.5" fill="#d4a020"/><text x="262.5" y="376.8" font-family="Liberation Sans" font-size="7.3" fill="#fff" text-anchor="middle">TEXT</text><path d="M253 392 H267 L271.5 396.5 V415.5 H253 Z" fill="#c8c8c8"/><path d="M267 392 L271.5 396.5 H267 Z" fill="#eeeeee"/><rect x="250.5" y="401" width="24" height="9.5" fill="#7aa84a"/><text x="262.5" y="408.8" font-family="Liberation Mono" font-size="7.6" fill="#fff" text-anchor="middle" letter-spacing="0.2">XML</text></svg>

<div class="a hdr" style="left:417px;top:101px;width:558px;text-align:center;font-size:11.2px">SalesDemo_Encryption</div>
<svg class="a" style="left:975px;top:98px" width="165" height="22" viewBox="975 98 165 22" fill="none">
<path d="M983 108.7 H997.3 M988.5 103.2 L983 108.7 L988.5 114.2" stroke="#d4d4d4" stroke-width="1.9"/>
<path d="M1010.5 108.7 H1024.8 M1019.3 103.2 L1024.8 108.7 L1019.3 114.2" stroke="#808080" stroke-width="1.9"/>
<path d="M1038 101 H1051 L1054 104 V117 H1038 Z" fill="#d0d0d0"/>
<rect x="1041" y="101" width="9" height="5.5" fill="#474747"/>
<rect x="1045.5" y="101.8" width="2.2" height="3.8" fill="#d0d0d0"/>
<rect x="1068.5" y="102.5" width="11" height="4" stroke="#d0d0d0" stroke-width="1.2"/>
<path d="M1066 106.5 H1082 V114 H1079.5 V111 H1068.5 V114 H1066 Z" fill="#d0d0d0"/>
<rect x="1069" y="111.5" width="10" height="5.2" stroke="#d0d0d0" stroke-width="1.2"/>
<rect x="1067.5" y="107.5" width="2" height="1" fill="#474747"/>
<path d="M1124 103 L1136 115 M1136 103 L1124 115" stroke="#d0d0d0" stroke-width="1.2"/>
</svg>
<div class="a" style="left:1098px;top:101px;font-size:12.5px;font-weight:bold;color:#d4d4d4;line-height:16px">?</div>
<svg class="a" style="left:417px;top:127px" width="716" height="469" viewBox="417 127 716 469">
<path d="M578 343 H637.5 V170 Q637.5 167 640.5 167 H644" stroke="rgba(110,105,90,0.24)" stroke-width="1.6" fill="none"/>
<path d="M578 343 H637.5 V226 Q637.5 223 640.5 223 H644" stroke="rgba(110,105,90,0.24)" stroke-width="1.6" fill="none"/>
<path d="M578 343 H637.5 V290 Q637.5 287 640.5 287 H644" stroke="rgba(110,105,90,0.24)" stroke-width="1.6" fill="none"/>
<path d="M578 343 H644" stroke="rgba(110,105,90,0.24)" stroke-width="1.6" fill="none"/>
<path d="M578 343 H637.5 V404 Q637.5 407 640.5 407 H644" stroke="rgba(110,105,90,0.24)" stroke-width="1.6" fill="none"/>
<path d="M578 343 H637.5 V468 Q637.5 471 640.5 471 H644" stroke="rgba(110,105,90,0.24)" stroke-width="1.6" fill="none"/>
<path d="M578 343 H637.5 V524 Q637.5 527 640.5 527 H644" stroke="rgba(110,105,90,0.24)" stroke-width="1.6" fill="none"/>
<polygon points="643,163.5 649,167 643,170.5" fill="#7a7a7a"/>
<polygon points="643,219.5 649,223 643,226.5" fill="#7a7a7a"/>
<polygon points="643,283.5 649,287 643,290.5" fill="#7a7a7a"/>
<polygon points="643,339.5 649,343 643,346.5" fill="#7a7a7a"/>
<polygon points="643,403.5 649,407 643,410.5" fill="#7a7a7a"/>
<polygon points="643,467.5 649,471 643,474.5" fill="#7a7a7a"/>
<polygon points="643,523.5 649,527 643,530.5" fill="#7a7a7a"/>
<path d="M778 343 H844" stroke="#ccc8bc" stroke-width="1.3"/><polygon points="843,339.5 849,343 843,346.5" fill="#7a7a7a"/>
<path d="M978 343 H1044" stroke="#ccc8bc" stroke-width="1.3"/><polygon points="1043,339.5 1049,343 1043,346.5" fill="#7a7a7a"/>
<path d="M778 527 H844" stroke="#ccc8bc" stroke-width="1.3"/><polygon points="843,523.5 849,527 843,530.5" fill="#7a7a7a"/>
<path d="M978 527 H1044" stroke="#ccc8bc" stroke-width="1.3"/><polygon points="1043,523.5 1049,527 1043,530.5" fill="#7a7a7a"/>
</svg>
<div class="a node" style="left:652px;top:150px;width:122px;height:35px;border:2px solid #c28ce0;background:#f2e4fb"></div>
<div class="a ntitle" style="left:686px;top:158.5px">Table</div><div class="a nsub" style="left:686px;top:168px">customerProfile</div>
<div class="a node" style="left:652px;top:206px;width:122px;height:34px;border:1px solid #d0acec;background:#fff"></div>
<div class="a ntitle" style="left:686px;top:214.5px">Table</div><div class="a nsub" style="left:686px;top:224px">customers</div>
<div class="a node" style="left:652px;top:270px;width:122px;height:34px;border:1px solid #d0acec;background:#fff"></div>
<div class="a ntitle" style="left:686px;top:278.5px">Table</div><div class="a nsub" style="left:686px;top:288px">data</div>
<div class="a node" style="left:652px;top:326px;width:122px;height:34px;border:1px solid #d0acec;background:#fff"></div>
<div class="a ntitle" style="left:686px;top:334.5px">Table</div><div class="a nsub" style="left:686px;top:344px">manufacturer details...</div>
<div class="a node" style="left:652px;top:390px;width:122px;height:34px;border:1px solid #d0acec;background:#fff"></div>
<div class="a ntitle" style="left:686px;top:398.5px">Table</div><div class="a nsub" style="left:686px;top:408px">manufacturers</div>
<div class="a node" style="left:652px;top:454px;width:122px;height:34px;border:1px solid #d0acec;background:#fff"></div>
<div class="a ntitle" style="left:686px;top:462.5px">Table</div><div class="a nsub" style="left:686px;top:472px">products</div>
<div class="a node" style="left:652px;top:510px;width:122px;height:34px;border:1px solid #d0acec;background:#fff"></div>
<div class="a ntitle" style="left:686px;top:518.5px">Table</div><div class="a nsub" style="left:686px;top:528px">promotions</div>
<div class="a node" style="left:452px;top:326px;width:122px;height:34px;border:1px solid #a4a4a4;background:#fff"></div>
<div class="a ntitle" style="left:486px;top:334.5px">In Memory</div><div class="a nsub" style="left:486px;top:344px">In-Memory</div>
<div class="a node" style="left:852px;top:326px;width:122px;height:34px;border:1px solid #8ccca4;background:#fff"></div>
<div class="a ntitle" style="left:886px;top:334.5px">LLM General</div><div class="a nsub" style="left:886px;top:344px">manufacturer details...</div>
<div class="a node" style="left:852px;top:510px;width:122px;height:34px;border:1px solid #8ccca4;background:#fff"></div>
<div class="a ntitle" style="left:886px;top:518.5px">LLM Translate</div><div class="a nsub" style="left:886px;top:528px">promotions</div>
<div class="a" style="left:417px;top:127px;width:716px;height:469px;overflow:hidden"><div class="a node" style="left:635px;top:199px;width:122px;height:34px;border:1px solid #8ccca4;background:#fff"></div>
<div class="a ntitle" style="left:669px;top:207.5px">LLM Sentiment</div><div class="a nsub" style="left:669px;top:217px">manufacturers</div>
<div class="a node" style="left:635px;top:383px;width:122px;height:34px;border:1px solid #a8c4f0;background:#fff"></div>
<div class="a ntitle" style="left:669px;top:391.5px">In Memory</div><div class="a nsub" style="left:669px;top:401px">In-Memory</div>
</div>
<svg class="a" style="left:417px;top:127px" width="716" height="469" viewBox="417 127 716 469">
<rect x="648.5" y="162.5" width="9" height="9" fill="#fff" stroke="#c9a2e6" stroke-width="1"/><rect x="768.5" y="162.5" width="9" height="9" fill="#fff" stroke="#c9a2e6" stroke-width="1"/><rect x="662.2" y="158" width="3.6" height="3.4" fill="#7a7a7a"/><rect x="662.2" y="162.9" width="3.6" height="3.8" fill="#c48fe2"/><rect x="662.2" y="167.95000000000002" width="3.6" height="3.8" fill="#c48fe2"/><rect x="662.2" y="173.0" width="3.6" height="3.8" fill="#c48fe2"/><rect x="667.1500000000001" y="158" width="3.6" height="3.4" fill="#7a7a7a"/><rect x="667.1500000000001" y="162.9" width="3.6" height="3.8" fill="#c48fe2"/><rect x="667.1500000000001" y="167.95000000000002" width="3.6" height="3.8" fill="#c48fe2"/><rect x="667.1500000000001" y="173.0" width="3.6" height="3.8" fill="#c48fe2"/><rect x="672.1" y="158" width="3.6" height="3.4" fill="#7a7a7a"/><rect x="672.1" y="162.9" width="3.6" height="3.8" fill="#c48fe2"/><rect x="672.1" y="167.95000000000002" width="3.6" height="3.8" fill="#c48fe2"/><rect x="672.1" y="173.0" width="3.6" height="3.8" fill="#c48fe2"/><rect x="677.0500000000001" y="158" width="3.6" height="3.4" fill="#7a7a7a"/><rect x="677.0500000000001" y="162.9" width="3.6" height="3.8" fill="#c48fe2"/><rect x="677.0500000000001" y="167.95000000000002" width="3.6" height="3.8" fill="#c48fe2"/><rect x="677.0500000000001" y="173.0" width="3.6" height="3.8" fill="#c48fe2"/>
<rect x="648.5" y="218.5" width="9" height="9" fill="#fff" stroke="#c9a2e6" stroke-width="1"/><rect x="768.5" y="218.5" width="9" height="9" fill="#fff" stroke="#c9a2e6" stroke-width="1"/><rect x="662.2" y="214" width="3.6" height="3.4" fill="#7a7a7a"/><rect x="662.2" y="218.9" width="3.6" height="3.8" fill="#c48fe2"/><rect x="662.2" y="223.95000000000002" width="3.6" height="3.8" fill="#c48fe2"/><rect x="662.2" y="229.0" width="3.6" height="3.8" fill="#c48fe2"/><rect x="667.1500000000001" y="214" width="3.6" height="3.4" fill="#7a7a7a"/><rect x="667.1500000000001" y="218.9" width="3.6" height="3.8" fill="#c48fe2"/><rect x="667.1500000000001" y="223.95000000000002" width="3.6" height="3.8" fill="#c48fe2"/><rect x="667.1500000000001" y="229.0" width="3.6" height="3.8" fill="#c48fe2"/><rect x="672.1" y="214" width="3.6" height="3.4" fill="#7a7a7a"/><rect x="672.1" y="218.9" width="3.6" height="3.8" fill="#c48fe2"/><rect x="672.1" y="223.95000000000002" width="3.6" height="3.8" fill="#c48fe2"/><rect x="672.1" y="229.0" width="3.6" height="3.8" fill="#c48fe2"/><rect x="677.0500000000001" y="214" width="3.6" height="3.4" fill="#7a7a7a"/><rect x="677.0500000000001" y="218.9" width="3.6" height="3.8" fill="#c48fe2"/><rect x="677.0500000000001" y="223.95000000000002" width="3.6" height="3.8" fill="#c48fe2"/><rect x="677.0500000000001" y="229.0" width="3.6" height="3.8" fill="#c48fe2"/>
<rect x="648.5" y="282.5" width="9" height="9" fill="#fff" stroke="#c9a2e6" stroke-width="1"/><rect x="768.5" y="282.5" width="9" height="9" fill="#fff" stroke="#c9a2e6" stroke-width="1"/><rect x="662.2" y="278" width="3.6" height="3.4" fill="#7a7a7a"/><rect x="662.2" y="282.9" width="3.6" height="3.8" fill="#c48fe2"/><rect x="662.2" y="287.95" width="3.6" height="3.8" fill="#c48fe2"/><rect x="662.2" y="293.0" width="3.6" height="3.8" fill="#c48fe2"/><rect x="667.1500000000001" y="278" width="3.6" height="3.4" fill="#7a7a7a"/><rect x="667.1500000000001" y="282.9" width="3.6" height="3.8" fill="#c48fe2"/><rect x="667.1500000000001" y="287.95" width="3.6" height="3.8" fill="#c48fe2"/><rect x="667.1500000000001" y="293.0" width="3.6" height="3.8" fill="#c48fe2"/><rect x="672.1" y="278" width="3.6" height="3.4" fill="#7a7a7a"/><rect x="672.1" y="282.9" width="3.6" height="3.8" fill="#c48fe2"/><rect x="672.1" y="287.95" width="3.6" height="3.8" fill="#c48fe2"/><rect x="672.1" y="293.0" width="3.6" height="3.8" fill="#c48fe2"/><rect x="677.0500000000001" y="278" width="3.6" height="3.4" fill="#7a7a7a"/><rect x="677.0500000000001" y="282.9" width="3.6" height="3.8" fill="#c48fe2"/><rect x="677.0500000000001" y="287.95" width="3.6" height="3.8" fill="#c48fe2"/><rect x="677.0500000000001" y="293.0" width="3.6" height="3.8" fill="#c48fe2"/>
<rect x="648.5" y="338.5" width="9" height="9" fill="#fff" stroke="#c9a2e6" stroke-width="1"/><rect x="768.5" y="338.5" width="9" height="9" fill="#fff" stroke="#c9a2e6" stroke-width="1"/><rect x="662.2" y="334" width="3.6" height="3.4" fill="#7a7a7a"/><rect x="662.2" y="338.9" width="3.6" height="3.8" fill="#c48fe2"/><rect x="662.2" y="343.95" width="3.6" height="3.8" fill="#c48fe2"/><rect x="662.2" y="349.0" width="3.6" height="3.8" fill="#c48fe2"/><rect x="667.1500000000001" y="334" width="3.6" height="3.4" fill="#7a7a7a"/><rect x="667.1500000000001" y="338.9" width="3.6" height="3.8" fill="#c48fe2"/><rect x="667.1500000000001" y="343.95" width="3.6" height="3.8" fill="#c48fe2"/><rect x="667.1500000000001" y="349.0" width="3.6" height="3.8" fill="#c48fe2"/><rect x="672.1" y="334" width="3.6" height="3.4" fill="#7a7a7a"/><rect x="672.1" y="338.9" width="3.6" height="3.8" fill="#c48fe2"/><rect x="672.1" y="343.95" width="3.6" height="3.8" fill="#c48fe2"/><rect x="672.1" y="349.0" width="3.6" height="3.8" fill="#c48fe2"/><rect x="677.0500000000001" y="334" width="3.6" height="3.4" fill="#7a7a7a"/><rect x="677.0500000000001" y="338.9" width="3.6" height="3.8" fill="#c48fe2"/><rect x="677.0500000000001" y="343.95" width="3.6" height="3.8" fill="#c48fe2"/><rect x="677.0500000000001" y="349.0" width="3.6" height="3.8" fill="#c48fe2"/>
<rect x="648.5" y="402.5" width="9" height="9" fill="#fff" stroke="#c9a2e6" stroke-width="1"/><rect x="768.5" y="402.5" width="9" height="9" fill="#fff" stroke="#c9a2e6" stroke-width="1"/><rect x="662.2" y="398" width="3.6" height="3.4" fill="#7a7a7a"/><rect x="662.2" y="402.9" width="3.6" height="3.8" fill="#c48fe2"/><rect x="662.2" y="407.95" width="3.6" height="3.8" fill="#c48fe2"/><rect x="662.2" y="413.0" width="3.6" height="3.8" fill="#c48fe2"/><rect x="667.1500000000001" y="398" width="3.6" height="3.4" fill="#7a7a7a"/><rect x="667.1500000000001" y="402.9" width="3.6" height="3.8" fill="#c48fe2"/><rect x="667.1500000000001" y="407.95" width="3.6" height="3.8" fill="#c48fe2"/><rect x="667.1500000000001" y="413.0" width="3.6" height="3.8" fill="#c48fe2"/><rect x="672.1" y="398" width="3.6" height="3.4" fill="#7a7a7a"/><rect x="672.1" y="402.9" width="3.6" height="3.8" fill="#c48fe2"/><rect x="672.1" y="407.95" width="3.6" height="3.8" fill="#c48fe2"/><rect x="672.1" y="413.0" width="3.6" height="3.8" fill="#c48fe2"/><rect x="677.0500000000001" y="398" width="3.6" height="3.4" fill="#7a7a7a"/><rect x="677.0500000000001" y="402.9" width="3.6" height="3.8" fill="#c48fe2"/><rect x="677.0500000000001" y="407.95" width="3.6" height="3.8" fill="#c48fe2"/><rect x="677.0500000000001" y="413.0" width="3.6" height="3.8" fill="#c48fe2"/>
<rect x="648.5" y="466.5" width="9" height="9" fill="#fff" stroke="#c9a2e6" stroke-width="1"/><rect x="768.5" y="466.5" width="9" height="9" fill="#fff" stroke="#c9a2e6" stroke-width="1"/><rect x="662.2" y="462" width="3.6" height="3.4" fill="#7a7a7a"/><rect x="662.2" y="466.9" width="3.6" height="3.8" fill="#c48fe2"/><rect x="662.2" y="471.95" width="3.6" height="3.8" fill="#c48fe2"/><rect x="662.2" y="477.0" width="3.6" height="3.8" fill="#c48fe2"/><rect x="667.1500000000001" y="462" width="3.6" height="3.4" fill="#7a7a7a"/><rect x="667.1500000000001" y="466.9" width="3.6" height="3.8" fill="#c48fe2"/><rect x="667.1500000000001" y="471.95" width="3.6" height="3.8" fill="#c48fe2"/><rect x="667.1500000000001" y="477.0" width="3.6" height="3.8" fill="#c48fe2"/><rect x="672.1" y="462" width="3.6" height="3.4" fill="#7a7a7a"/><rect x="672.1" y="466.9" width="3.6" height="3.8" fill="#c48fe2"/><rect x="672.1" y="471.95" width="3.6" height="3.8" fill="#c48fe2"/><rect x="672.1" y="477.0" width="3.6" height="3.8" fill="#c48fe2"/><rect x="677.0500000000001" y="462" width="3.6" height="3.4" fill="#7a7a7a"/><rect x="677.0500000000001" y="466.9" width="3.6" height="3.8" fill="#c48fe2"/><rect x="677.0500000000001" y="471.95" width="3.6" height="3.8" fill="#c48fe2"/><rect x="677.0500000000001" y="477.0" width="3.6" height="3.8" fill="#c48fe2"/>
<rect x="648.5" y="522.5" width="9" height="9" fill="#fff" stroke="#c9a2e6" stroke-width="1"/><rect x="768.5" y="522.5" width="9" height="9" fill="#fff" stroke="#c9a2e6" stroke-width="1"/><rect x="662.2" y="518" width="3.6" height="3.4" fill="#7a7a7a"/><rect x="662.2" y="522.9" width="3.6" height="3.8" fill="#c48fe2"/><rect x="662.2" y="527.9499999999999" width="3.6" height="3.8" fill="#c48fe2"/><rect x="662.2" y="533.0" width="3.6" height="3.8" fill="#c48fe2"/><rect x="667.1500000000001" y="518" width="3.6" height="3.4" fill="#7a7a7a"/><rect x="667.1500000000001" y="522.9" width="3.6" height="3.8" fill="#c48fe2"/><rect x="667.1500000000001" y="527.9499999999999" width="3.6" height="3.8" fill="#c48fe2"/><rect x="667.1500000000001" y="533.0" width="3.6" height="3.8" fill="#c48fe2"/><rect x="672.1" y="518" width="3.6" height="3.4" fill="#7a7a7a"/><rect x="672.1" y="522.9" width="3.6" height="3.8" fill="#c48fe2"/><rect x="672.1" y="527.9499999999999" width="3.6" height="3.8" fill="#c48fe2"/><rect x="672.1" y="533.0" width="3.6" height="3.8" fill="#c48fe2"/><rect x="677.0500000000001" y="518" width="3.6" height="3.4" fill="#7a7a7a"/><rect x="677.0500000000001" y="522.9" width="3.6" height="3.8" fill="#c48fe2"/><rect x="677.0500000000001" y="527.9499999999999" width="3.6" height="3.8" fill="#c48fe2"/><rect x="677.0500000000001" y="533.0" width="3.6" height="3.8" fill="#c48fe2"/>
<rect x="568.5" y="338.5" width="9" height="9" fill="#fff" stroke="#9a9a9a" stroke-width="1"/><polygon points="471.6,335 471.6,351 463.3,343" fill="#8c8c8c"/><polygon points="471.6,335 471.6,351 480,343" fill="#5bbcd8"/>
<rect x="848.5" y="338.5" width="9" height="9" fill="#fff" stroke="#8ccca4" stroke-width="1"/><rect x="848.5" y="522.5" width="9" height="9" fill="#fff" stroke="#8ccca4" stroke-width="1"/><rect x="1048.5" y="338.5" width="9" height="9" fill="#fff" stroke="#8ccca4" stroke-width="1"/><rect x="968.5" y="338.5" width="9" height="9" fill="#fff" stroke="#8ccca4" stroke-width="1"/><rect x="968.5" y="522.5" width="9" height="9" fill="#fff" stroke="#8ccca4" stroke-width="1"/><rect x="1048.5" y="522.5" width="9" height="9" fill="#fff" stroke="#a8c4f0" stroke-width="1"/><polygon points="1071.6,519 1071.6,535 1063.3,527" fill="#8c8c8c"/><polygon points="1071.6,519 1071.6,535 1080,527" fill="#5bbcd8"/>
<g stroke="#a4a4a4" stroke-width="0.9" fill="none"><path d="M861.90 346.40 L871.00 351.50" stroke-dasharray="1.2 0.6"/><path d="M863.22 344.63 L870.80 348.88" stroke-dasharray="1.2 0.6"/><path d="M864.53 342.87 L870.60 346.27" stroke-dasharray="1.2 0.6"/><path d="M865.85 341.10 L870.40 343.65" stroke-dasharray="1.2 0.6"/><path d="M867.17 339.33 L870.20 341.03" stroke-dasharray="1.2 0.6"/><path d="M868.48 337.57 L870.00 338.42" stroke-dasharray="1.2 0.6"/><path d="M871 351.5 L880.8 345.4" stroke="#b0b0b0"/><path d="M870.5999999999999 335.8 L871 351.5" stroke="#c0c0c0"/><path d="M872.80 339.42 V350.38" stroke="#a0a0a0" stroke-width="1.1"/><path d="M875.30 341.60 V348.82" stroke="#a0a0a0" stroke-width="1.1"/><path d="M877.80 343.78 V347.27" stroke="#a0a0a0" stroke-width="1.1"/></g><path d="M870.8 334 H880.3 V340 H874.5 L872.5 342.5 V340 H870.8 Z" fill="#fff" stroke="#30c070" stroke-width="1.3" stroke-linejoin="round"/>
<g stroke="#a4a4a4" stroke-width="0.9" fill="none"><path d="M861.90 530.40 L871.00 535.50" stroke-dasharray="1.2 0.6"/><path d="M863.22 528.63 L870.80 532.88" stroke-dasharray="1.2 0.6"/><path d="M864.53 526.87 L870.60 530.27" stroke-dasharray="1.2 0.6"/><path d="M865.85 525.10 L870.40 527.65" stroke-dasharray="1.2 0.6"/><path d="M867.17 523.33 L870.20 525.03" stroke-dasharray="1.2 0.6"/><path d="M868.48 521.57 L870.00 522.42" stroke-dasharray="1.2 0.6"/><path d="M871 535.5 L880.8 529.4" stroke="#b0b0b0"/><path d="M870.5999999999999 519.8 L871 535.5" stroke="#c0c0c0"/><path d="M872.80 523.42 V534.38" stroke="#a0a0a0" stroke-width="1.1"/><path d="M875.30 525.60 V532.82" stroke="#a0a0a0" stroke-width="1.1"/><path d="M877.80 527.78 V531.27" stroke="#a0a0a0" stroke-width="1.1"/></g><circle cx="875.4" cy="522.9" r="5" fill="#fff" stroke="#30c070" stroke-width="1.5"/><ellipse cx="875.4" cy="522.9" rx="2" ry="5" fill="none" stroke="#30c070" stroke-width="1.3"/><path d="M870.5 522.9 H880.3" stroke="#30c070" stroke-width="1.2"/>
<g stroke="#a4a4a4" stroke-width="0.9" fill="none"><path d="M1064.0 343 L1071 346.5" stroke-dasharray="1.2 0.6"/><path d="M1065.5 341 L1071 344.5" stroke-dasharray="1.2 0.6"/><path d="M1067.0 339 L1071 342.5" stroke-dasharray="1.2 0.6"/><path d="M1068.5 337 L1071 340.5" stroke-dasharray="1.2 0.6"/><path d="M1070.0 335 L1071 338.5" stroke-dasharray="1.2 0.6"/><path d="M1071.6 334 V351.5" stroke="#b8b8b8" stroke-width="1.2"/><path d="M1071.6 351.5 L1081 345.5" stroke="#a8a8a8"/><path d="M1073.6 343 V350.3 M1076.1 344 V348.7 M1078.6 344.5 V347" stroke="#a0a0a0" stroke-width="1.1"/></g><rect x="1074" y="336" width="6.5" height="5" fill="#fff" stroke="#30c070" stroke-width="1.4"/><path d="M1074.5 337.5 L1076.3 333.8" stroke="#30c070" stroke-width="1.6"/><rect x="1062.5" y="344.5" width="6.5" height="5" fill="#fff" stroke="#30c070" stroke-width="1.4"/><path d="M1064.8 349.5 L1065.5 352" stroke="#30c070" stroke-width="1.6"/>
</svg>
<div class="a hdr" style="left:425px;top:603.5px;font-size:11.2px">Preview</div>
<svg class="a" style="left:1070px;top:600px" width="70" height="22" viewBox="1070 600 70 22" fill="none" stroke="#d0d0d0" stroke-width="1.1">
<path d="M1077.5 611 Q1084.5 603.5 1091.5 611 Q1084.5 618.5 1077.5 611 Z"/><circle cx="1084.5" cy="611" r="2.3"/>
<path d="M1101.5 616.5 L1105.5 612.5" stroke-width="1.3"/><path d="M1106.5 605.5 L1109 603.5 L1113 607.5 L1111 610 L1109.5 610 L1107 612.5 L1107.5 614.5 L1106.5 615.5 L1101.5 610.5 L1102.5 609.5 L1104.5 610 L1107 607.5 Z" fill="#d0d0d0" stroke="none"/>
<path d="M1124 608.5 L1129 613.5 L1134 608.5" stroke-width="1.2"/>
</svg>
<div class="a" style="left:417px;top:627px;width:727px;height:149px;overflow:hidden">
<div class="a" style="left:0;top:0;width:727px;height:26px;background:#535353"></div>
<svg class="a" style="left:9px;top:7px" width="14" height="12" viewBox="0 0 14 12"><g fill="#5aa0f5"><rect x="0" y="0" width="13" height="2"/><rect x="0" y="3" width="10" height="2"/><rect x="0" y="6" width="7" height="2"/><rect x="0" y="9" width="4" height="2"/></g></svg><div class="a" style="left:23px;top:6px;width:76px;overflow:hidden;white-space:nowrap;font-size:11.8px;color:#f4f4f4;line-height:16px">profileKey</div>
<svg class="a" style="left:109px;top:7px" width="14" height="12" viewBox="0 0 14 12"><g fill="#5aa0f5"><rect x="0" y="0" width="13" height="2"/><rect x="0" y="3" width="10" height="2"/><rect x="0" y="6" width="7" height="2"/><rect x="0" y="9" width="4" height="2"/></g></svg><div class="a" style="left:123px;top:6px;width:76px;overflow:hidden;white-space:nowrap;font-size:11.8px;color:#f4f4f4;line-height:16px">Marital St</div>
<div class="a" style="left:99px;top:0;width:1.5px;height:26px;background:#262626"></div>
<svg class="a" style="left:209px;top:7px" width="14" height="12" viewBox="0 0 14 12"><g fill="#5aa0f5"><rect x="0" y="0" width="13" height="2"/><rect x="0" y="3" width="10" height="2"/><rect x="0" y="6" width="7" height="2"/><rect x="0" y="9" width="4" height="2"/></g></svg><div class="a" style="left:223px;top:6px;width:76px;overflow:hidden;white-space:nowrap;font-size:11.8px;color:#f4f4f4;line-height:16px">Gender</div>
<div class="a" style="left:199px;top:0;width:1.5px;height:26px;background:#262626"></div>
<svg class="a" style="left:309px;top:7px" width="14" height="12" viewBox="0 0 14 12"><g fill="#5aa0f5"><rect x="0" y="0" width="13" height="2"/><rect x="0" y="3" width="10" height="2"/><rect x="0" y="6" width="7" height="2"/><rect x="0" y="9" width="4" height="2"/></g></svg><div class="a" style="left:323px;top:6px;width:76px;overflow:hidden;white-space:nowrap;font-size:11.8px;color:#f4f4f4;line-height:16px">Income</div>
<div class="a" style="left:299px;top:0;width:1.5px;height:26px;background:#262626"></div>
<svg class="a" style="left:409px;top:7px" width="14" height="12" viewBox="0 0 14 12"><g fill="#5aa0f5"><rect x="0" y="0" width="13" height="2"/><rect x="0" y="3" width="10" height="2"/><rect x="0" y="6" width="7" height="2"/><rect x="0" y="9" width="4" height="2"/></g></svg><div class="a" style="left:423px;top:6px;width:76px;overflow:hidden;white-space:nowrap;font-size:11.8px;color:#f4f4f4;line-height:16px">Children</div>
<div class="a" style="left:399px;top:0;width:1.5px;height:26px;background:#262626"></div>
<svg class="a" style="left:509px;top:7px" width="14" height="12" viewBox="0 0 14 12"><g fill="#5aa0f5"><rect x="0" y="0" width="13" height="2"/><rect x="0" y="3" width="10" height="2"/><rect x="0" y="6" width="7" height="2"/><rect x="0" y="9" width="4" height="2"/></g></svg><div class="a" style="left:523px;top:6px;width:76px;overflow:hidden;white-space:nowrap;font-size:11.8px;color:#f4f4f4;line-height:16px">Education</div>
<div class="a" style="left:499px;top:0;width:1.5px;height:26px;background:#262626"></div>
<svg class="a" style="left:609px;top:7px" width="14" height="12" viewBox="0 0 14 12"><g fill="#5aa0f5"><rect x="0" y="0" width="13" height="2"/><rect x="0" y="3" width="10" height="2"/><rect x="0" y="6" width="7" height="2"/><rect x="0" y="9" width="4" height="2"/></g></svg><div class="a" style="left:623px;top:6px;width:76px;overflow:hidden;white-space:nowrap;font-size:11.8px;color:#f4f4f4;line-height:16px">Occupatic</div>
<div class="a" style="left:599px;top:0;width:1.5px;height:26px;background:#262626"></div>
<svg class="a" style="left:709px;top:7px" width="14" height="12" viewBox="0 0 14 12"><g fill="#5aa0f5"><rect x="0" y="0" width="13" height="2"/><rect x="0" y="3" width="10" height="2"/><rect x="0" y="6" width="7" height="2"/><rect x="0" y="9" width="4" height="2"/></g></svg><div class="a" style="left:723px;top:6px;width:76px;overflow:hidden;white-space:nowrap;font-size:11.8px;color:#f4f4f4;line-height:16px">H</div>
<div class="a" style="left:699px;top:0;width:1.5px;height:26px;background:#262626"></div>
<div class="a" style="left:0;top:26px;width:716px;height:26px;background:#4e4e4e"></div>
<div class="a" style="left:7px;top:32px;font-size:11.8px;color:#d4d4d4;line-height:16px;white-space:nowrap">1</div>
<div class="a" style="left:99px;top:26px;width:1px;height:26px;background:#444"></div><div class="a" style="left:107px;top:32px;font-size:11.8px;color:#d4d4d4;line-height:16px;white-space:nowrap">Married</div>
<div class="a" style="left:199px;top:26px;width:1px;height:26px;background:#444"></div><div class="a" style="left:207px;top:32px;font-size:11.8px;color:#d4d4d4;line-height:16px;white-space:nowrap">Female</div>
<div class="a" style="left:299px;top:26px;width:1px;height:26px;background:#444"></div><div class="a" style="left:307px;top:32px;font-size:11.8px;color:#d4d4d4;line-height:16px;white-space:nowrap">40000</div>
<div class="a" style="left:399px;top:26px;width:1px;height:26px;background:#444"></div><div class="a" style="left:407px;top:32px;font-size:11.8px;color:#d4d4d4;line-height:16px;white-space:nowrap">1</div>
<div class="a" style="left:499px;top:26px;width:1px;height:26px;background:#444"></div><div class="a" style="left:507px;top:32px;font-size:11.8px;color:#d4d4d4;line-height:16px;white-space:nowrap">Bachelors</div>
<div class="a" style="left:599px;top:26px;width:1px;height:26px;background:#444"></div><div class="a" style="left:607px;top:32px;font-size:11.8px;color:#d4d4d4;line-height:16px;white-space:nowrap">Skilled Manual</div>
<div class="a" style="left:699px;top:26px;width:1px;height:26px;background:#444"></div><div class="a" style="left:707px;top:32px;font-size:11.8px;color:#d4d4d4;line-height:16px;white-space:nowrap">Ye</div>
<div class="a" style="left:0;top:52px;width:716px;height:26px;background:#333333"></div>
<div class="a" style="left:7px;top:58px;font-size:11.8px;color:#d4d4d4;line-height:16px;white-space:nowrap">2</div>
<div class="a" style="left:99px;top:52px;width:1px;height:26px;background:#444"></div><div class="a" style="left:107px;top:58px;font-size:11.8px;color:#d4d4d4;line-height:16px;white-space:nowrap">Married</div>
<div class="a" style="left:199px;top:52px;width:1px;height:26px;background:#444"></div><div class="a" style="left:207px;top:58px;font-size:11.8px;color:#d4d4d4;line-height:16px;white-space:nowrap">Male</div>
<div class="a" style="left:299px;top:52px;width:1px;height:26px;background:#444"></div><div class="a" style="left:307px;top:58px;font-size:11.8px;color:#d4d4d4;line-height:16px;white-space:nowrap">30000</div>
<div class="a" style="left:399px;top:52px;width:1px;height:26px;background:#444"></div><div class="a" style="left:407px;top:58px;font-size:11.8px;color:#d4d4d4;line-height:16px;white-space:nowrap">3</div>
<div class="a" style="left:499px;top:52px;width:1px;height:26px;background:#444"></div><div class="a" style="left:507px;top:58px;font-size:11.8px;color:#d4d4d4;line-height:16px;white-space:nowrap">Partial College</div>
<div class="a" style="left:599px;top:52px;width:1px;height:26px;background:#444"></div><div class="a" style="left:607px;top:58px;font-size:11.8px;color:#d4d4d4;line-height:16px;white-space:nowrap">Clerical</div>
<div class="a" style="left:699px;top:52px;width:1px;height:26px;background:#444"></div><div class="a" style="left:707px;top:58px;font-size:11.8px;color:#d4d4d4;line-height:16px;white-space:nowrap">Ye</div>
<div class="a" style="left:0;top:78px;width:716px;height:26px;background:#4a4a4a"></div>
<div class="a" style="left:7px;top:84px;font-size:11.8px;color:#d4d4d4;line-height:16px;white-space:nowrap">3</div>
<div class="a" style="left:99px;top:78px;width:1px;height:26px;background:#444"></div><div class="a" style="left:107px;top:84px;font-size:11.8px;color:#d4d4d4;line-height:16px;white-space:nowrap">Married</div>
<div class="a" style="left:199px;top:78px;width:1px;height:26px;background:#444"></div><div class="a" style="left:207px;top:84px;font-size:11.8px;color:#d4d4d4;line-height:16px;white-space:nowrap">Male</div>
<div class="a" style="left:299px;top:78px;width:1px;height:26px;background:#444"></div><div class="a" style="left:307px;top:84px;font-size:11.8px;color:#d4d4d4;line-height:16px;white-space:nowrap">80000</div>
<div class="a" style="left:399px;top:78px;width:1px;height:26px;background:#444"></div><div class="a" style="left:407px;top:84px;font-size:11.8px;color:#d4d4d4;line-height:16px;white-space:nowrap">5</div>
<div class="a" style="left:499px;top:78px;width:1px;height:26px;background:#444"></div><div class="a" style="left:507px;top:84px;font-size:11.8px;color:#d4d4d4;line-height:16px;white-space:nowrap">Partial College</div>
<div class="a" style="left:599px;top:78px;width:1px;height:26px;background:#444"></div><div class="a" style="left:607px;top:84px;font-size:11.8px;color:#d4d4d4;line-height:16px;white-space:nowrap">Professional</div>
<div class="a" style="left:699px;top:78px;width:1px;height:26px;background:#444"></div><div class="a" style="left:707px;top:84px;font-size:11.8px;color:#d4d4d4;line-height:16px;white-space:nowrap">N</div>
<div class="a" style="left:0;top:104px;width:716px;height:26px;background:#525252"></div>
<div class="a" style="left:7px;top:110px;font-size:11.8px;color:#d4d4d4;line-height:16px;white-space:nowrap">4</div>
<div class="a" style="left:99px;top:104px;width:1px;height:26px;background:#444"></div><div class="a" style="left:107px;top:110px;font-size:11.8px;color:#d4d4d4;line-height:16px;white-space:nowrap">Single</div>
<div class="a" style="left:199px;top:104px;width:1px;height:26px;background:#444"></div><div class="a" style="left:207px;top:110px;font-size:11.8px;color:#d4d4d4;line-height:16px;white-space:nowrap">Male</div>
<div class="a" style="left:299px;top:104px;width:1px;height:26px;background:#444"></div><div class="a" style="left:307px;top:110px;font-size:11.8px;color:#d4d4d4;line-height:16px;white-space:nowrap">70000</div>
<div class="a" style="left:399px;top:104px;width:1px;height:26px;background:#444"></div><div class="a" style="left:407px;top:110px;font-size:11.8px;color:#d4d4d4;line-height:16px;white-space:nowrap">0</div>
<div class="a" style="left:499px;top:104px;width:1px;height:26px;background:#444"></div><div class="a" style="left:507px;top:110px;font-size:11.8px;color:#d4d4d4;line-height:16px;white-space:nowrap">Bachelors</div>
<div class="a" style="left:599px;top:104px;width:1px;height:26px;background:#444"></div><div class="a" style="left:607px;top:110px;font-size:11.8px;color:#d4d4d4;line-height:16px;white-space:nowrap">Professional</div>
<div class="a" style="left:699px;top:104px;width:1px;height:26px;background:#444"></div><div class="a" style="left:707px;top:110px;font-size:11.8px;color:#d4d4d4;line-height:16px;white-space:nowrap">Ye</div>
<div class="a" style="left:0;top:130px;width:716px;height:26px;background:#4a4a4a"></div>
<div class="a" style="left:7px;top:136px;font-size:11.8px;color:#d4d4d4;line-height:16px;white-space:nowrap">5</div>
<div class="a" style="left:99px;top:130px;width:1px;height:26px;background:#444"></div><div class="a" style="left:107px;top:136px;font-size:11.8px;color:#d4d4d4;line-height:16px;white-space:nowrap">Single</div>
<div class="a" style="left:199px;top:130px;width:1px;height:26px;background:#444"></div><div class="a" style="left:207px;top:136px;font-size:11.8px;color:#d4d4d4;line-height:16px;white-space:nowrap">Male</div>
<div class="a" style="left:299px;top:130px;width:1px;height:26px;background:#444"></div><div class="a" style="left:307px;top:136px;font-size:11.8px;color:#d4d4d4;line-height:16px;white-space:nowrap">30000</div>
<div class="a" style="left:399px;top:130px;width:1px;height:26px;background:#444"></div><div class="a" style="left:407px;top:136px;font-size:11.8px;color:#d4d4d4;line-height:16px;white-space:nowrap">0</div>
<div class="a" style="left:499px;top:130px;width:1px;height:26px;background:#444"></div><div class="a" style="left:507px;top:136px;font-size:11.8px;color:#d4d4d4;line-height:16px;white-space:nowrap">Bachelors</div>
<div class="a" style="left:599px;top:130px;width:1px;height:26px;background:#444"></div><div class="a" style="left:607px;top:136px;font-size:11.8px;color:#d4d4d4;line-height:16px;white-space:nowrap">Clerical</div>
<div class="a" style="left:699px;top:130px;width:1px;height:26px;background:#444"></div><div class="a" style="left:707px;top:136px;font-size:11.8px;color:#d4d4d4;line-height:16px;white-space:nowrap">N</div>
</div>
<div class="a" style="left:1133px;top:653px;width:11px;height:134px;background:#4e4e4e"></div>
<div class="a" style="left:1133px;top:653px;width:11px;height:17px;background:#6a6a6a"></div>
<div class="a" style="left:417px;top:776px;width:716px;height:11px;background:#4e4e4e"></div>
<div class="a" style="left:417px;top:776px;width:427px;height:11px;background:#6a6a6a"></div>
<div class="a" style="left:417px;top:787px;width:727px;height:3px;background:#2a2a2a"></div>
<div class="a" style="left:417px;top:790px;width:86px;height:30px;background:#535353"></div>
<svg class="a" style="left:427px;top:804px" width="12" height="7" viewBox="0 0 11 6" fill="none" stroke="#cfcfcf" stroke-width="1.1"><path d="M0.5 0.5 L5.5 5.5 L10.5 0.5"/></svg><div class="a" style="left:446px;top:799.5px;font-size:11.5px;font-weight:bold;color:#d2d2d2;line-height:16px;white-space:nowrap">Preview</div>
<div class="a" style="left:506px;top:790px;width:91px;height:30px;background:#4a4a4a"></div>
<svg class="a" style="left:516px;top:803px" width="12" height="7" viewBox="0 0 11 6" fill="none" stroke="#cfcfcf" stroke-width="1.1"><path d="M0.5 5.5 L5.5 0.5 L10.5 5.5"/></svg><div class="a" style="left:535px;top:799.5px;font-size:11.5px;font-weight:bold;color:#d2d2d2;line-height:16px;white-space:nowrap">Progress</div>
<div class="a" style="left:600px;top:790px;width:76px;height:30px;background:#4a4a4a"></div>
<svg class="a" style="left:610px;top:803px" width="12" height="7" viewBox="0 0 11 6" fill="none" stroke="#cfcfcf" stroke-width="1.1"><path d="M0.5 5.5 L5.5 0.5 L10.5 5.5"/></svg><div class="a" style="left:629px;top:799.5px;font-size:11.5px;font-weight:bold;color:#d2d2d2;line-height:16px;white-space:nowrap">Errors</div>
<div class="a" style="left:679px;top:790px;width:465px;height:30px;background:#4a4a4a"></div>
<svg class="a" style="left:689px;top:803px" width="12" height="7" viewBox="0 0 11 6" fill="none" stroke="#cfcfcf" stroke-width="1.1"><path d="M0.5 5.5 L5.5 0.5 L10.5 5.5"/></svg><div class="a" style="left:708px;top:799.5px;font-size:11.5px;font-weight:bold;color:#d2d2d2;line-height:16px;white-space:nowrap">Master Flow</div>
<div class="a" style="left:503px;top:790px;width:3px;height:30px;background:#2a2a2a"></div>
<div class="a" style="left:597px;top:790px;width:3px;height:30px;background:#2a2a2a"></div>
<div class="a" style="left:676px;top:790px;width:3px;height:30px;background:#2a2a2a"></div>
<div class="a hdr" style="left:1155px;top:101px;font-size:11.3px">Properties</div>
<svg class="a" style="left:1462px;top:100px" width="42" height="18" viewBox="1462 100 42 18" fill="none" stroke="#d0d0d0" stroke-width="1.1">
<path d="M1466 109 Q1473 101.5 1480 109 Q1473 116.5 1466 109 Z"/><circle cx="1473" cy="109" r="2.4"/>
<path d="M1493.5 104 L1498.5 109 L1493.5 114" stroke-width="1.2"/>
</svg>
<div class="a" style="left:1158px;top:136px;width:341px;height:96px;background:#535353;border:1px solid #262626"></div>
<div class="a" style="left:1158px;top:235px;width:341px;height:90px;background:#535353;border:1px solid #262626"></div>
<div class="a" style="left:1158px;top:328px;width:341px;height:99px;background:#535353;border:1px solid #262626"></div>
<div class="a" style="left:1158px;top:430px;width:341px;height:28px;background:#535353;border:1px solid #262626"></div>
<div class="a" style="left:1158px;top:461px;width:341px;height:28px;background:#535353;border:1px solid #262626"></div>
<div class="a" style="left:1158px;top:492px;width:341px;height:28px;background:#535353;border:1px solid #262626"></div>
<svg class="a" style="left:1168px;top:147px" width="12" height="7" viewBox="0 0 12 7" fill="none" stroke="#c8c8c8" stroke-width="1.1"><path d="M1 1 L6 6 L11 1"/></svg><div class="a phdr" style="left:1188px;top:143px">Result Properties</div>
<div class="a plbl" style="left:1170px;top:164px">Resulting Table Name</div>
<div class="a" style="left:1173px;top:192px;width:311px;height:25px;background:#f7f7f7;border:1px solid #d8d8d8"></div><div class="a" style="left:1180px;top:197px;font-size:11.9px;color:#1a1a1a;line-height:16px">customerProfile</div>
<svg class="a" style="left:1168px;top:246px" width="12" height="7" viewBox="0 0 12 7" fill="none" stroke="#c8c8c8" stroke-width="1.1"><path d="M1 1 L6 6 L11 1"/></svg><svg class="a" style="left:1186px;top:241px" width="17" height="17" viewBox="1186 241 17 17"><rect x="1187" y="242" width="3" height="2.2" fill="#999"/><rect x="1187" y="246" width="3" height="3" fill="#c49ae4"/><rect x="1187" y="250" width="3" height="3" fill="#c49ae4"/><rect x="1187" y="254" width="3" height="3" fill="#c49ae4"/><rect x="1191" y="242" width="3" height="2.2" fill="#999"/><rect x="1191" y="246" width="3" height="3" fill="#c49ae4"/><rect x="1191" y="250" width="3" height="3" fill="#c49ae4"/><rect x="1191" y="254" width="3" height="3" fill="#c49ae4"/><rect x="1195" y="242" width="3" height="2.2" fill="#999"/><rect x="1195" y="246" width="3" height="3" fill="#c49ae4"/><rect x="1195" y="250" width="3" height="3" fill="#c49ae4"/><rect x="1195" y="254" width="3" height="3" fill="#c49ae4"/><rect x="1199" y="242" width="3" height="2.2" fill="#999"/><rect x="1199" y="246" width="3" height="3" fill="#c49ae4"/><rect x="1199" y="250" width="3" height="3" fill="#c49ae4"/><rect x="1199" y="254" width="3" height="3" fill="#c49ae4"/></svg><div class="a phdr" style="left:1211px;top:242px">Table</div>
<div class="a plbl" style="left:1170px;top:263px">Table</div>
<div class="a" style="left:1170px;top:287px;width:317px;height:26px;background:#fff;border:1px solid #e0e0e0"></div><svg class="a" style="left:1182px;top:294px" width="14" height="13" viewBox="0 0 14 13"><rect x="1" y="0.5" width="12" height="2.5" fill="#f0b070"/><rect x="1.5" y="3" width="11" height="9.5" fill="none" stroke="#999" stroke-width="0.8"/><g fill="#999"><rect x="3" y="5" width="2" height="1.5"/><rect x="6" y="5" width="2" height="1.5"/><rect x="9" y="5" width="2" height="1.5"/><rect x="3" y="8" width="2" height="1.5"/><rect x="6" y="8" width="2" height="1.5"/><rect x="9" y="8" width="2" height="1.5"/></g></svg><div class="a" style="left:1207px;top:293.5px;font-size:11.9px;color:#1a1a1a;line-height:16px">customerProfile</div>
<svg class="a" style="left:1465px;top:297px" width="12" height="7" viewBox="0 0 12 7"><polygon points="0.5,0.5 11.5,0.5 6,6" fill="#8a8a8a"/></svg>
<svg class="a" style="left:1168px;top:339px" width="12" height="7" viewBox="0 0 12 7" fill="none" stroke="#c8c8c8" stroke-width="1.1"><path d="M1 1 L6 6 L11 1"/></svg><svg class="a" style="left:1186px;top:334px" width="17" height="17" viewBox="0 0 17 17"><path d="M0.5 0.5 H16 L10.5 6.5 V16 H6 V6.5 Z" fill="#3cb8a8"/><rect x="0.5" y="0.5" width="15.5" height="2" fill="#2a9a8c"/></svg><div class="a phdr" style="left:1212px;top:335px">Filters</div>
<svg class="a" style="left:1173px;top:360px" width="17" height="15" viewBox="0 0 17 15" fill="none" stroke="#8a8a8a" stroke-width="1.1"><path d="M3.5 1 Q1.5 1 1.5 3 V6 L0.5 7.5 L1.5 9 V12 Q1.5 14 3.5 14"/><rect x="5.5" y="1.5" width="10" height="5"/><rect x="5.5" y="8.5" width="10" height="5"/></svg><div class="a" style="left:1197px;top:360px;font-size:11.9px;color:#8a8a8a;line-height:16px">Group</div>
<svg class="a" style="left:1175px;top:395px" width="13" height="13" viewBox="0 0 13 13" stroke="#3aa0e8" stroke-width="1.6"><path d="M6.5 0.5 V12.5 M0.5 6.5 H12.5"/></svg><div class="a" style="left:1197px;top:394px;font-size:11.9px;color:#f0f0f0;line-height:16px">Query Condition</div>
<svg class="a" style="left:1171px;top:438px" width="7" height="12" viewBox="0 0 7 12" fill="none" stroke="#c8c8c8" stroke-width="1.1"><path d="M1 1 L6 6 L1 11"/></svg><svg class="a" style="left:1186px;top:436px" width="17" height="17" viewBox="0 0 17 17"><g fill="#8a8a8a"><rect x="1" y="3" width="3" height="13"/><rect x="7" y="3" width="3" height="13"/><rect x="13" y="3" width="3" height="9"/></g><rect x="1" y="3" width="3" height="13" fill="#2fb0a8"/><rect x="1" y="0.5" width="3" height="2" fill="#e0e0e0"/><rect x="7" y="0.5" width="3" height="2" fill="#8a8a8a"/><rect x="13" y="0.5" width="3" height="2" fill="#8a8a8a"/><path d="M11 14 L12.5 15.5 L16 11.5" stroke="#70c070" fill="none" stroke-width="1.2"/></svg><div class="a phdr" style="left:1212px;top:437px">Column Selection</div>
<svg class="a" style="left:1171px;top:469px" width="7" height="12" viewBox="0 0 7 12" fill="none" stroke="#c8c8c8" stroke-width="1.1"><path d="M1 1 L6 6 L1 11"/></svg><svg class="a" style="left:1186px;top:467px" width="17" height="17" viewBox="0 0 17 17" fill="none" stroke-width="1.2"><path d="M6 1 L2.5 13 M10.5 1 L7 13 M2 5 H11.5 M1.5 9 H10" stroke="#e89a30"/><circle cx="12.5" cy="12.5" r="3.2" stroke="#bbb" stroke-width="0.9"/><circle cx="12.5" cy="12.5" r="1.2" stroke="#bbb" stroke-width="0.9"/></svg><div class="a phdr" style="left:1212px;top:468px">Set Variable Values</div>
<svg class="a" style="left:1171px;top:500px" width="7" height="12" viewBox="0 0 7 12" fill="none" stroke="#c8c8c8" stroke-width="1.1"><path d="M1 1 L6 6 L1 11"/></svg><svg class="a" style="left:1186px;top:497px" width="17" height="17" viewBox="0 0 17 17" fill="none" stroke="#5aa8d8" stroke-width="1.1"><circle cx="8.5" cy="8.5" r="7.6"/><path d="M8.5 7 V13 M7 7 H8.5 M7 13 H10" /><circle cx="8.5" cy="4.5" r="0.6" fill="#5aa8d8"/></svg><div class="a phdr" style="left:1212px;top:499px">Description</div>

</body></html>
